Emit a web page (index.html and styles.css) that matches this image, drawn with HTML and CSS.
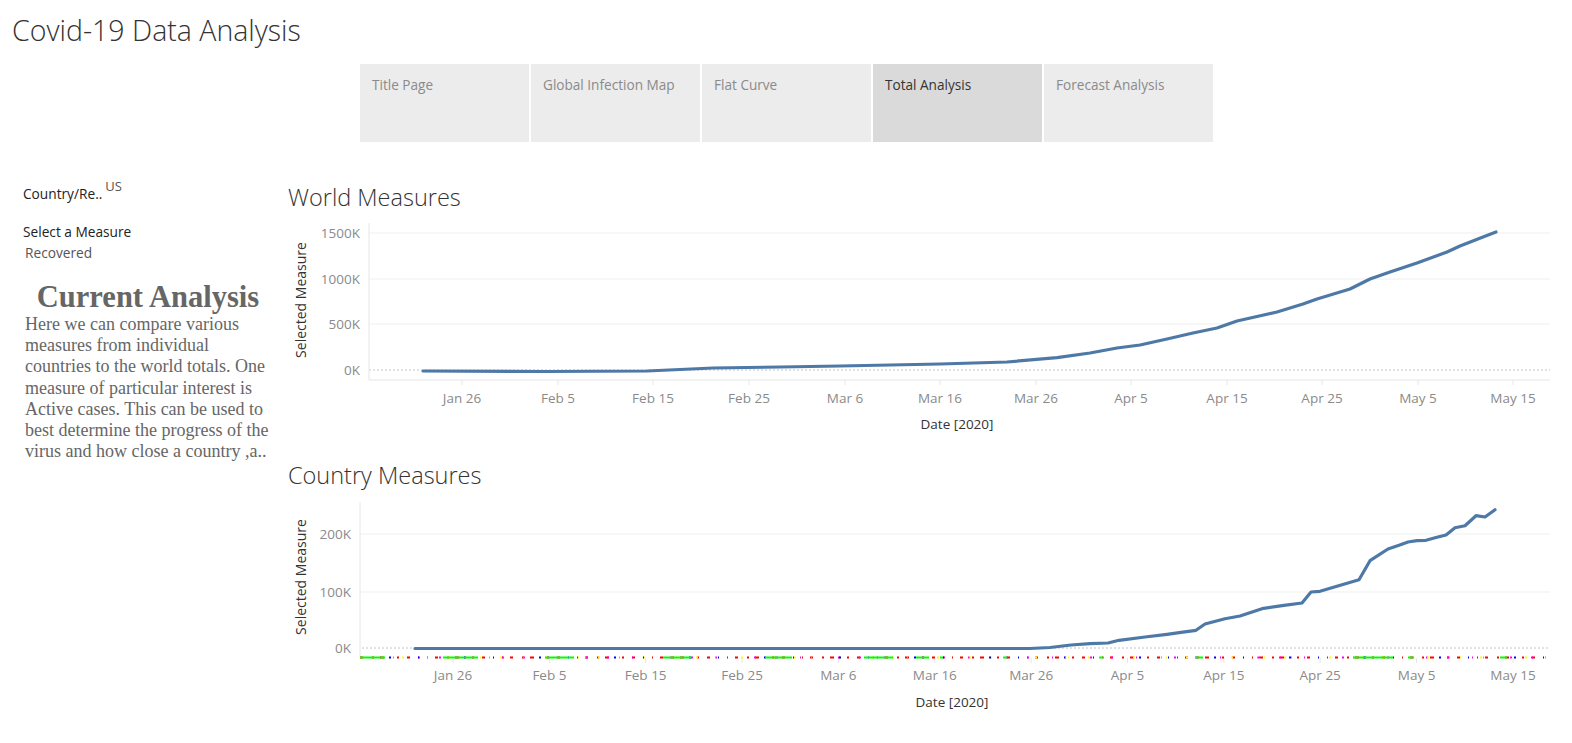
FILE: index.html
```html
<!DOCTYPE html>
<html lang="en">
<head>
<meta charset="utf-8">
<title>Covid-19 Data Analysis</title>
<link rel="stylesheet" href="styles.css">
</head>
<body>
<div class="page">
  <h1 class="title">Covid-19 Data Analysis</h1>
  <nav class="tabs">
    <div class="tab">Title Page</div>
    <div class="tab">Global Infection Map</div>
    <div class="tab">Flat Curve</div>
    <div class="tab active">Total Analysis</div>
    <div class="tab">Forecast Analysis</div>
  </nav>
  <div class="main">
    <aside class="side">
      <div class="filter"><span class="flabel">Country/Re..</span><span class="fval">US</span></div>
      <div class="param">
        <div class="plabel">Select a Measure</div>
        <div class="pval">Recovered</div>
      </div>
      <div class="analysis">
        <h2 class="an-title">Current Analysis</h2>
        <p class="an-text">Here we can compare various<br>measures from individual<br>countries to the world totals. One<br>measure of particular interest is<br>Active cases. This can be used to<br>best determine the progress of the<br>virus and how close a country ,a..</p>
      </div>
    </aside>
    <section class="charts">
      <h3 class="chart-title">World Measures</h3>
      <svg class="chart" width="1292" height="232" viewBox="0 0 1292 232">
        <text class="ytitle" transform="translate(22 86) rotate(-90)">Selected Measure</text>
        <g class="grid">
          <line x1="89" y1="19" x2="1270" y2="19"/>
          <line x1="89" y1="65" x2="1270" y2="65"/>
          <line x1="89" y1="110" x2="1270" y2="110"/>
        </g>
        <line class="zero" x1="89" y1="156" x2="1270" y2="156"/>
        <g class="axis">
          <line x1="89" y1="9" x2="89" y2="166"/>
          <line x1="89" y1="166" x2="1270" y2="166"/>
          <line x1="182" y1="166" x2="182" y2="171"/>
          <line x1="278" y1="166" x2="278" y2="171"/>
          <line x1="373" y1="166" x2="373" y2="171"/>
          <line x1="469" y1="166" x2="469" y2="171"/>
          <line x1="565" y1="166" x2="565" y2="171"/>
          <line x1="660" y1="166" x2="660" y2="171"/>
          <line x1="756" y1="166" x2="756" y2="171"/>
          <line x1="851" y1="166" x2="851" y2="171"/>
          <line x1="947" y1="166" x2="947" y2="171"/>
          <line x1="1042" y1="166" x2="1042" y2="171"/>
          <line x1="1138" y1="166" x2="1138" y2="171"/>
          <line x1="1233" y1="166" x2="1233" y2="171"/>
        </g>
        <g class="ylab">
          <text x="80" y="24">1500K</text>
          <text x="80" y="70">1000K</text>
          <text x="80" y="115">500K</text>
          <text x="80" y="161">0K</text>
        </g>
        <g class="xlab">
          <text x="182" y="189">Jan 26</text>
          <text x="278" y="189">Feb 5</text>
          <text x="373" y="189">Feb 15</text>
          <text x="469" y="189">Feb 25</text>
          <text x="565" y="189">Mar 6</text>
          <text x="660" y="189">Mar 16</text>
          <text x="756" y="189">Mar 26</text>
          <text x="851" y="189">Apr 5</text>
          <text x="947" y="189">Apr 15</text>
          <text x="1042" y="189">Apr 25</text>
          <text x="1138" y="189">May 5</text>
          <text x="1233" y="189">May 15</text>
        </g>
        <text class="xtitle" x="677" y="215">Date [2020]</text>
        <polyline class="series" points="143,157 267,157.5 367,157 433,154 500,153 560,152 660,150 727,148 777,143.7 810,139 837,134 860,131 887,125 913,119 937,114 957,107 997,98 1023,90 1037,85 1070,75 1090,65 1110,58 1137,49 1167,38 1180,32 1203,23 1216,18"/>
      </svg>
      <h3 class="chart-title second">Country Measures</h3>
      <svg class="chart" width="1292" height="232" viewBox="0 0 1292 232">
        <text class="ytitle" transform="translate(22 85) rotate(-90)">Selected Measure</text>
        <g class="grid">
          <line x1="80" y1="42" x2="1270" y2="42"/>
          <line x1="80" y1="100" x2="1270" y2="100"/>
        </g>
        <line class="zero" x1="82" y1="156" x2="1270" y2="156"/>
        <g class="axis">
          <line x1="80" y1="10" x2="80" y2="166"/>
          <line x1="173" y1="166" x2="173" y2="171"/>
          <line x1="269.4" y1="166" x2="269.4" y2="171"/>
          <line x1="365.7" y1="166" x2="365.7" y2="171"/>
          <line x1="462.1" y1="166" x2="462.1" y2="171"/>
          <line x1="558.4" y1="166" x2="558.4" y2="171"/>
          <line x1="654.8" y1="166" x2="654.8" y2="171"/>
          <line x1="751.2" y1="166" x2="751.2" y2="171"/>
          <line x1="847.5" y1="166" x2="847.5" y2="171"/>
          <line x1="943.9" y1="166" x2="943.9" y2="171"/>
          <line x1="1040.2" y1="166" x2="1040.2" y2="171"/>
          <line x1="1136.6" y1="166" x2="1136.6" y2="171"/>
          <line x1="1233" y1="166" x2="1233" y2="171"/>
        </g>
        <g class="marks">
          <line class="m-red" x1="80" y1="165.5" x2="1268" y2="165.5"/>
          <line class="m-mag" x1="80" y1="165.5" x2="1268" y2="165.5"/>
          <line class="m-yel" x1="80" y1="165.5" x2="1268" y2="165.5"/>
          <line class="m-blu" x1="80" y1="165.5" x2="1268" y2="165.5"/>
          <line class="m-cya" x1="80" y1="165.5" x2="1268" y2="165.5"/>
          <path class="m-grn" d="M80 165.5h25M163 165.5h35M265 165.5h29M383 165.5h28M485 165.5h27M584 165.5h29M636 165.5h13M660 165.5h3M724 165.5h3M820 165.5h4M916 165.5h7M1073 165.5h40M1128 165.5h6M1220 165.5h7"/>
        </g>
        <g class="ylab">
          <text x="71" y="47">200K</text>
          <text x="71" y="105">100K</text>
          <text x="71" y="161">0K</text>
        </g>
        <g class="xlab">
          <text x="173" y="188">Jan 26</text>
          <text x="269.4" y="188">Feb 5</text>
          <text x="365.7" y="188">Feb 15</text>
          <text x="462.1" y="188">Feb 25</text>
          <text x="558.4" y="188">Mar 6</text>
          <text x="654.8" y="188">Mar 16</text>
          <text x="751.2" y="188">Mar 26</text>
          <text x="847.5" y="188">Apr 5</text>
          <text x="943.9" y="188">Apr 15</text>
          <text x="1040.2" y="188">Apr 25</text>
          <text x="1136.6" y="188">May 5</text>
          <text x="1233" y="188">May 15</text>
        </g>
        <text class="xtitle" x="672" y="215">Date [2020]</text>
        <polyline class="series" points="135,156.5 750,156.5 770,155.5 791,153 810,151.7 828,151 839,148.3 865,145 887,142.3 901,140.3 916,138.3 925,132 945,126.7 960,124 982,116.7 1004,113.3 1022,111 1031,100 1040,99.3 1051,96 1079,87.7 1090,68.7 1108,57 1119,53.3 1128,50 1137,48.7 1146,48.3 1157,45.3 1166,43 1175,35.7 1185,33.7 1196,23.7 1205,25 1215,17.7"/>
      </svg>
    </section>
  </div>
</div>
</body>
</html>
```
FILE: styles.css
```css
* { box-sizing: border-box; }
html, body { margin: 0; padding: 0; background: #fff; }
body { font-family: "Open Sans", "DejaVu Sans", sans-serif; color: #333; width: 1572px; height: 743px; overflow: hidden; }

.title {
  margin: 11px 0 0 12px;
  font-size: 28.5px;
  font-weight: 300;
  line-height: 38px;
  color: #333;
}

.tabs {
  display: flex;
  gap: 2px;
  margin: 15px 0 0 360px;
}
.tab {
  width: 169px;
  height: 78px;
  background: #ececec;
  color: #8a8a8a;
  font-size: 13.6px;
  line-height: 18px;
  padding: 12px 0 0 12px;
}
.tab.active { background: #dadada; color: #333; }

.main {
  display: grid;
  grid-template-columns: 280px 1292px;
}

.side { padding-top: 43px; }
.filter { margin-left: 23px; font-size: 13.7px; line-height: 18px; color: #222; }
.fval { margin-left: 3px; font-size: 13px; line-height: 0; vertical-align: 8px; color: #555; }
.param { margin-top: 20px; margin-left: 23px; font-size: 13.7px; line-height: 18px; }
.plabel { color: #222; }
.pval { margin-top: 3px; margin-left: 2px; color: #555; }

.analysis { margin: 18px 0 0 25px; width: 246px; }
.an-title {
  margin: 0;
  font-family: "Liberation Serif", "Times New Roman", serif;
  font-weight: bold;
  font-size: 30.5px;
  line-height: 34px;
  text-align: center;
  color: #666;
}
.an-text {
  margin: 0;
  font-family: "Liberation Serif", "Times New Roman", serif;
  font-size: 18px;
  line-height: 21.2px;
  color: #666;
  white-space: nowrap;
}

.charts { display: flex; flex-direction: column; padding-top: 38px; }
.chart-title {
  margin: 0 0 0 8px;
  font-size: 23.5px;
  font-weight: 300;
  line-height: 34px;
  color: #333;
}
.chart-title.second { margin-top: 12px; }
.chart { display: block; }

.ytitle { font-family: "Open Sans", sans-serif; font-size: 14px; fill: #333; text-anchor: middle; dominant-baseline: middle; }
.ylab text { font-family: "Open Sans", sans-serif; font-size: 13.5px; fill: #8a8a8a; text-anchor: end; }
.xlab text { font-family: "Open Sans", sans-serif; font-size: 13.5px; fill: #8a8a8a; text-anchor: middle; }
.xtitle { font-family: "Open Sans", sans-serif; font-size: 13.5px; font-weight: 500; fill: #333; text-anchor: middle; }

.grid line { stroke: #efefef; stroke-width: 1; }
.axis line { stroke: #e6e6e6; stroke-width: 1; }
.zero { stroke: #c4c4c4; stroke-width: 1; stroke-dasharray: 2 2; }
.series { fill: none; stroke: #4e79a7; stroke-width: 3.2; stroke-linejoin: round; stroke-linecap: round; }

.marks line, .marks path { stroke-width: 2; fill: none; }
.m-grn { stroke: #00ff00; }
.m-red { stroke: #ff0000; stroke-dasharray: 3 9 2 6 4 13 2 8 3 17 1 7; }
.m-mag { stroke: #ff00ff; stroke-dasharray: 2 23 1 37 2 19; stroke-dashoffset: 5; }
.m-yel { stroke: #ffff00; stroke-dasharray: 2 31 1 19 2 43; stroke-dashoffset: 11; }
.m-blu { stroke: #0000ff; stroke-dasharray: 1 45 2 27; stroke-dashoffset: 17; }
.m-cya { stroke: #00e5ff; stroke-dasharray: 1 61 1 33; stroke-dashoffset: 29; }
```
